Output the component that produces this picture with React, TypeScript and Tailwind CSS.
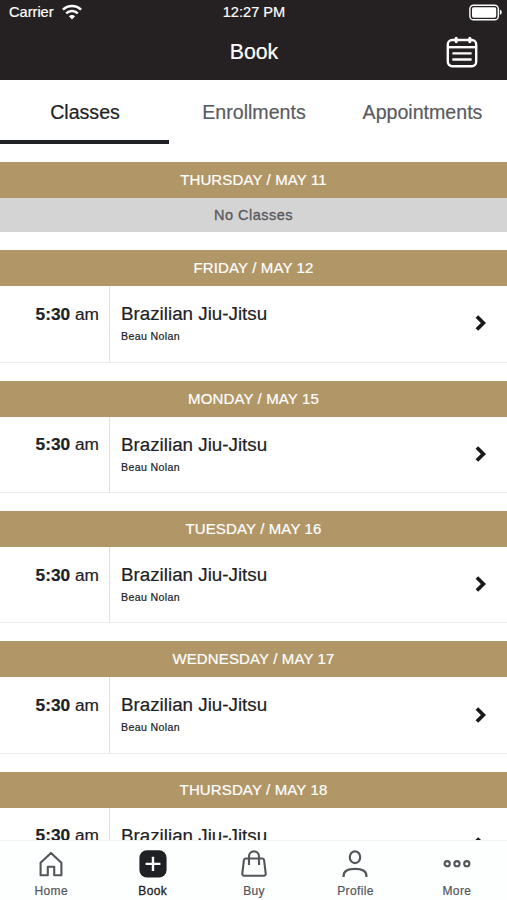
type ClassDay = {
  label: string;
  classes: { time: string; period: string; name: string; teacher: string }[];
};

const jiuJitsu = { time: "5:30", period: "am", name: "Brazilian Jiu-Jitsu", teacher: "Beau Nolan" };

const days: ClassDay[] = [
  { label: "THURSDAY / MAY 11", classes: [] },
  { label: "FRIDAY / MAY 12", classes: [jiuJitsu] },
  { label: "MONDAY / MAY 15", classes: [jiuJitsu] },
  { label: "TUESDAY / MAY 16", classes: [jiuJitsu] },
  { label: "WEDNESDAY / MAY 17", classes: [jiuJitsu] },
  { label: "THURSDAY / MAY 18", classes: [jiuJitsu] },
];

const WifiIcon = () => (
  <svg width="20" height="16" viewBox="0 0 20 16" fill="none" stroke="#fff" strokeWidth="2.4">
    <path d="M0.9 5.7a13 13 0 0 1 18.2 0" />
    <path d="M4.2 9.4a8.2 8.2 0 0 1 11.6 0" />
    <path d="M10 15.4l-3.1-3.1a4.4 4.4 0 0 1 6.2 0z" fill="#fff" stroke="none" />
  </svg>
);

const BatteryIcon = () => (
  <svg width="34" height="17" viewBox="0 0 34 17" fill="none">
    <rect x="0.9" y="1.2" width="28.4" height="14.6" rx="3.6" stroke="#fff" strokeWidth="1.4" />
    <rect x="3" y="3.3" width="24.2" height="10.4" rx="1.6" fill="#fff" />
    <path d="M30.8 5.6c1.3.4 1.9 1.4 1.9 2.7s-.6 2.3-1.9 2.7z" fill="#fff" />
  </svg>
);

const CalendarIcon = () => (
  <svg width="32" height="32" viewBox="0 0 32 32" fill="none" stroke="#fff" strokeWidth="2.4" strokeLinecap="round">
    <rect x="1.8" y="4" width="28.4" height="26.2" rx="4.4" />
    <path d="M2 11.2h28" strokeLinecap="butt" />
    <path d="M10.2 2.4v3.2M23.8 2.4v3.2" strokeWidth="3.2" />
    <path d="M6.4 17.4h19.2M6.4 23.5h19.2" strokeLinecap="butt" />
  </svg>
);

const HomeIcon = () => (
  <svg width="28" height="28" viewBox="0 0 28 28" fill="none" stroke="#53555a" strokeWidth="2.1" strokeLinejoin="round">
    <path d="M3.6 12.8L14 2.9l10.4 9.9v12.5h-7.2v-8.5h-6.4v8.5H3.6z" />
  </svg>
);

const BookIcon = () => (
  <svg width="28" height="28" viewBox="0 0 28 28">
    <rect x="0.4" y="0.3" width="27.2" height="27.2" rx="7.5" fill="#202124" />
    <path d="M14 6.7v14.4M6.6 13.9h14.8" stroke="#fff" strokeWidth="2.4" fill="none" />
  </svg>
);

const BuyIcon = () => (
  <svg width="28" height="28" viewBox="0 0 28 28" fill="none" stroke="#53555a" strokeWidth="2.1" strokeLinejoin="round">
    <path d="M5.6 8.5h16.8q1.5 0 1.7 1.6l1.6 13.3q.2 2.3-1.9 2.4H4.2q-2.1-.1-1.9-2.4l1.6-13.3q.2-1.6 1.7-1.6z" />
    <path d="M9 15V6.4a5 5 0 0 1 10 0V15" />
  </svg>
);

const ProfileIcon = () => (
  <svg width="28" height="28" viewBox="0 0 28 28" fill="none" stroke="#53555a" strokeWidth="2.2">
    <ellipse cx="14" cy="7.2" rx="5.2" ry="5.9" />
    <path d="M2.6 27v-1.1c0-4.4 4.2-7 11.4-7s11.4 2.6 11.4 7V27" />
  </svg>
);

const MoreIcon = () => (
  <svg width="28" height="28" viewBox="0 0 28 28" fill="none" stroke="#53555a" strokeWidth="2.1">
    <circle cx="4.2" cy="13.7" r="2.6" />
    <circle cx="14" cy="13.7" r="2.6" />
    <circle cx="23.8" cy="13.7" r="2.6" />
  </svg>
);

const navItems = [
  { label: "Home", Icon: HomeIcon },
  { label: "Book", Icon: BookIcon, active: true },
  { label: "Buy", Icon: BuyIcon },
  { label: "Profile", Icon: ProfileIcon },
  { label: "More", Icon: MoreIcon },
];

const Header = () => (
  <header className="h-20 shrink-0 bg-[#252122] text-white">
    <div className="grid h-[25px] grid-cols-3 items-center pr-[4px] pl-[9px] text-[14.6px] [-webkit-text-stroke:0.2px_white]">
      <div className="flex items-center gap-2">
        <span>Carrier</span>
        <WifiIcon />
      </div>
      <span className="pr-[4px] text-center">12:27 PM</span>
      <div className="flex justify-end">
        <BatteryIcon />
      </div>
    </div>
    <div className="grid h-[54px] grid-cols-[1fr_auto_1fr] items-center pr-[29px] pl-[30px]">
      <h1 className="col-start-2 pt-[2px] text-[21.3px] [-webkit-text-stroke:0.2px_white]">Book</h1>
      <div className="flex justify-end">
        <CalendarIcon />
      </div>
    </div>
  </header>
);

const Tabs = () => (
  <nav className="grid h-16 shrink-0 grid-cols-3 text-center text-[19.6px] text-[#5a5b60] [-webkit-text-stroke:0.2px_#5a5b60]">
    <span className="h-16 border-b-4 border-[#202124] pt-px pl-px leading-[63px] text-[#202124] [-webkit-text-stroke:0.2px_#202124]">Classes</span>
    <span className="pt-px pl-px leading-[63px]">Enrollments</span>
    <span className="pt-px leading-[63px]">Appointments</span>
  </nav>
);

const DaySection = ({ day }: { day: ClassDay }) => (
  <section>
    <h2 className="h-9 bg-[#b19768] text-center text-[15px] leading-9 tracking-[0.13px] text-white [-webkit-text-stroke:0.2px_white]">{day.label}</h2>
    {day.classes.length === 0 && (
      <p className="h-[34.3px] bg-[#d4d4d4] text-center text-[14.5px] leading-[34px] tracking-[0.5px] text-[#5a5b60] [-webkit-text-stroke:0.35px_#5a5b60]">
        No Classes
      </p>
    )}
    {day.classes.map((item) => (
      <div key={item.name} className="flex h-[76.35px] border-b border-[#ebebed] text-[#202124] [-webkit-text-stroke:0.2px_#202124]">
        <div className="w-[110px] border-r border-[#dfe1e4] pt-[14.7px] pr-[10px] text-right text-[17.3px] leading-[26px]">
          <strong>{item.time}</strong> {item.period}
        </div>
        <div className="flex-1 pt-[15px] pl-[11px]">
          <h3 className="text-[18.8px] leading-[26px]">{item.name}</h3>
          <p className="text-[10.6px] leading-[18px] tracking-[0.37px]">{item.teacher}</p>
        </div>
        <div className="flex items-center pr-[19.5px] pb-px">
          <svg width="14" height="18" viewBox="0 0 14 18" fill="none" stroke="#18191b" strokeWidth="3.7">
            <path d="M2.9 2.5L9.4 9L2.9 15.5" />
          </svg>
        </div>
      </div>
    ))}
  </section>
);

const BottomNav = () => (
  <nav className="grid h-[60px] shrink-0 grid-cols-5 border-t border-[#f3f3f5] bg-[#fdfefe] pt-[9px]">
    {navItems.map(({ label, Icon, active }) => (
      <div key={label} className="flex flex-col items-center pl-[1.2px]">
        <Icon />
        <span
          className={
            active
              ? "mt-[5px] text-[12px] leading-4 tracking-[0.35px] text-[#202124] [-webkit-text-stroke:0.3px_#202124]"
              : "mt-[5px] text-[12px] leading-4 tracking-[0.35px] text-[#53555a] [-webkit-text-stroke:0.2px_#53555a]"
          }
        >
          {label}
        </span>
      </div>
    ))}
  </nav>
);

export default function App() {
  return (
    <div className="flex h-[900px] w-[507px] flex-col overflow-hidden bg-white font-['Liberation_Sans',Arial,sans-serif]">
      <Header />
      <Tabs />
      <main className="flex min-h-0 flex-1 flex-col gap-[18px] overflow-hidden pt-[18px]">
        {days.map((day) => (
          <DaySection key={day.label} day={day} />
        ))}
      </main>
      <BottomNav />
    </div>
  );
}
